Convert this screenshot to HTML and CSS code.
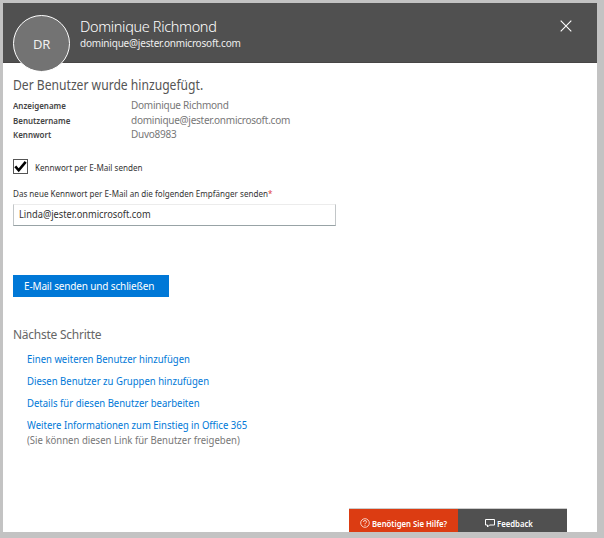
FILE: index.html
```html
<!DOCTYPE html>
<html lang="de">
<head>
<meta charset="utf-8">
<title>Benutzer hinzugefügt</title>
<link rel="stylesheet" href="styles.css">
</head>
<body>
<main class="panel">
  <header class="header">
    <div class="avatar"><span>DR</span></div>
    <div class="identity">
      <h1 class="name">Dominique Richmond</h1>
      <p class="mail">dominique@jester.onmicrosoft.com</p>
    </div>
    <button class="close" aria-label="Schließen">
      <svg width="12" height="12" viewBox="0 0 12 12"><path d="M.7.7l10.6 10.6M11.3.7L.7 11.3" fill="none" stroke="#fff" stroke-width="1.1"/></svg>
    </button>
  </header>
  <section class="content">
    <h2 class="title">Der Benutzer wurde hinzugefügt.</h2>
    <dl class="details">
      <dt>Anzeigename</dt><dd>Dominique Richmond</dd>
      <dt>Benutzername</dt><dd>dominique@jester.onmicrosoft.com</dd>
      <dt>Kennwort</dt><dd>Duvo8983</dd>
    </dl>
    <div class="check-row">
      <span class="checkbox"><svg width="13" height="13" viewBox="0 0 13 13"><path d="M1.3 6.400l3.400 3.900L11.700 1.800" fill="none" stroke="#000" stroke-width="2.600"/></svg></span>
      <span class="check-label">Kennwort per E-Mail senden</span>
    </div>
    <div class="field-label">Das neue Kennwort per E-Mail an die folgenden Empfänger senden<b class="required">*</b></div>
    <div class="field"><span class="value">Linda@jester.onmicrosoft.com</span></div>
    <button class="submit">E-Mail senden und schließen</button>
    <h3 class="subtitle">Nächste Schritte</h3>
    <ul class="links">
      <li><a>Einen weiteren Benutzer hinzufügen</a></li>
      <li><a>Diesen Benutzer zu Gruppen hinzufügen</a></li>
      <li><a>Details für diesen Benutzer bearbeiten</a></li>
      <li><a>Weitere Informationen zum Einstieg in Office 365</a><p class="note">(Sie können diesen Link für Benutzer freigeben)</p></li>
    </ul>
  </section>
  <footer class="footer">
    <div class="help">
      <svg width="10" height="10" viewBox="0 0 10 10" fill="none" stroke="#fff" stroke-width=".75"><circle cx="5" cy="5" r="4.3"/><path d="M3.5 4q0-1.500 1.500-1.500T6.500 3.900Q6.500 4.600 5.600 5.100 5 5.500 5 6.300M5 7v.9"/></svg>
      <span>Benötigen Sie Hilfe?</span>
    </div>
    <div class="feedback">
      <svg width="10" height="10" viewBox="0 0 10 10" fill="none" stroke="#fff"><path d="M.5 1.500h9v5.500h-5L2.500 9V7h-2z"/></svg>
      <span>Feedback</span>
    </div>
  </footer>
</main>
</body>
</html>
```
FILE: styles.css
```css
* { box-sizing: border-box; margin: 0; padding: 0; }
body {
  width: 604px;
  height: 538px;
  padding: 3px 7px 6px 3px;
  background: #c3c3c3;
  font-family: "Noto Sans", "Open Sans", sans-serif;
  overflow: hidden;
  white-space: nowrap;
}
h1, h2, h3 { font-weight: 400; }
button { border: 0; font: inherit; background: none; }

/* condensed text */
.title, dt, .check-label, .field-label, .value, .links a, .note, .footer span {
  transform-origin: 0 50%;
}

.panel { height: 529px; display: flex; flex-direction: column; background: #fff; }
.header {
  height: 60px;
  flex: none;
  display: flex;
  align-items: flex-start;
  padding-left: 10px;
  background: #505050;
  border-bottom: 1px solid #474545;
  color: #fff;
}
.avatar {
  width: 57px;
  height: 57px;
  margin-top: 12px;
  border: 1.5px solid #fff;
  border-radius: 50%;
  background: #737373;
  display: flex;
  align-items: center;
  justify-content: center;
  font-size: 13px;
  letter-spacing: -.3px;
  color: #f0f0f0;
}
.identity { margin: 13px 0 0 10px; }
.name { font-size: 14.5px; line-height: 20px; font-weight: 300; letter-spacing: -.35px; }
.mail { font-size: 10px; line-height: 14px; letter-spacing: -.2px; color: #eee; }
.close { margin: 17px 25px 0 auto; width: 12px; height: 12px; }
.close svg { display: block; }
.content { padding: 12px 10px 0; flex: 1; }
.title { font-size: 13.5px; line-height: 20px; transform: scaleX(.898); color: #555; }
.details {
  display: grid;
  grid-template-columns: 118px auto;
  grid-template-rows: 15px 14px 15px;
  margin-top: 3px;
  line-height: 15px;
}
dt { font-size: 9.5px; font-weight: 600; transform: scaleX(.838); color: #444; }
dd { font-size: 10px; letter-spacing: -.25px; color: #777; }
.check-row { display: flex; align-items: center; margin-top: 17px; height: 15px; gap: 7px; font-size: 9.5px; color: #333; }
.check-label { padding-top: 2px; transform: scaleX(.853); }
.checkbox { width: 15px; height: 15px; border: 1px solid #555; }
.checkbox svg { display: block; }
.field-label { margin-top: 12px; font-size: 9.5px; line-height: 15px; transform: scaleX(.849); color: #333; }
.required { color: #e03c3c; font-weight: 400; }
.field {
  width: 323px;
  height: 22px;
  margin-top: 3px;
  padding-left: 5px;
  border: 1px solid #c2c6c8;
  border-top-color: #ececec;
  border-bottom-color: #98a3a6;
  font-size: 10px;
  line-height: 18px;
  color: #333;
}
.value { display: block; transform: scaleX(.927); }
.submit { display: block; width: 156px; height: 22px; margin-top: 49px; padding-left: 11px; background: #0078d7; color: #fff; text-align: left; font-size: 10px; line-height: 23px; letter-spacing: -.15px; }
.subtitle { margin-top: 28px; font-size: 12px; line-height: 20px; letter-spacing: -.25px; color: #666; }
.links { list-style: none; margin: 6px 0 0 14px; font-size: 11px; line-height: 16px; color: #0078d7; }
.links li { height: 22px; }
.links a { display: block; transform: scaleX(.866); }
.note { line-height: 13px; transform: scaleX(.868); color: #777; }
.footer { display: flex; margin-left: 346px; width: 218px; height: 24px; border-top: 1px solid #ccc; color: #fff; font-size: 9px; font-weight: 600; }
.help, .feedback { width: 109px; display: flex; align-items: center; gap: 2px; padding-top: 5px; }
.help svg, .feedback svg { flex: none; }
.help span, .feedback span { transform: scaleX(.86); }
.help { background: #dc3c12; padding-left: 11px; }
.feedback { background: #505050; padding-left: 27px; }
```
